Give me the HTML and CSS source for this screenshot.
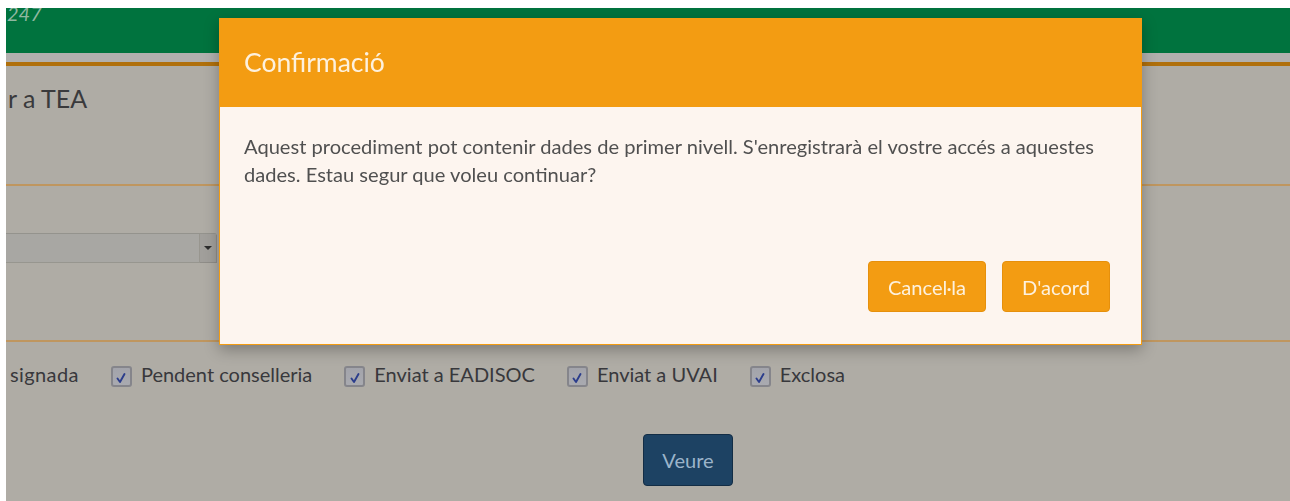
FILE: index.html
```html
<!DOCTYPE html>
<html lang="ca">
<head>
<meta charset="utf-8">
<title>Sol·licitud per a TEA</title>
<link rel="stylesheet" href="styles.css">
</head>
<body>
<div class="page">
  <header class="topbar"><span class="brand">247</span></header>
  <div class="subbar"></div>
  <main class="content">
    <h2 class="title">r a TEA</h2>
    <hr class="rule">
    <div class="field">
      <div class="select"><span class="select-arrow"></span></div>
    </div>
    <hr class="rule">
    <div class="checks">
      <span class="check-text">signada</span>
      <label class="check">
        <span class="box"><svg viewBox="0 0 12 12" width="12" height="12"><path d="M2.5 6.5 L5 10 L9.5 2" fill="none" stroke="#2b3d8c" stroke-width="1.9" stroke-linecap="round" stroke-linejoin="round"/></svg></span>
        <span class="check-text">Pendent conselleria</span>
      </label>
      <label class="check">
        <span class="box"><svg viewBox="0 0 12 12" width="12" height="12"><path d="M2.5 6.5 L5 10 L9.5 2" fill="none" stroke="#2b3d8c" stroke-width="1.9" stroke-linecap="round" stroke-linejoin="round"/></svg></span>
        <span class="check-text">Enviat a EADISOC</span>
      </label>
      <label class="check">
        <span class="box"><svg viewBox="0 0 12 12" width="12" height="12"><path d="M2.5 6.5 L5 10 L9.5 2" fill="none" stroke="#2b3d8c" stroke-width="1.9" stroke-linecap="round" stroke-linejoin="round"/></svg></span>
        <span class="check-text">Enviat a UVAI</span>
      </label>
      <label class="check">
        <span class="box"><svg viewBox="0 0 12 12" width="12" height="12"><path d="M2.5 6.5 L5 10 L9.5 2" fill="none" stroke="#2b3d8c" stroke-width="1.9" stroke-linecap="round" stroke-linejoin="round"/></svg></span>
        <span class="check-text">Exclosa</span>
      </label>
    </div>
    <div class="actions">
      <button class="btn-primary" type="button">Veure</button>
    </div>
  </main>
</div>

<div class="modal" role="dialog">
  <div class="modal-header">
    <h4 class="modal-title">Confirmació</h4>
  </div>
  <div class="modal-body">
    <p>Aquest procediment pot contenir dades de primer nivell. S'enregistrarà el vostre accés a aquestes dades. Estau segur que voleu continuar?</p>
  </div>
  <div class="modal-footer">
    <button class="btn-warning" type="button">Cancel·la</button>
    <button class="btn-warning" type="button">D'acord</button>
  </div>
</div>
</body>
</html>
```

FILE: styles.css
```css
* {
  box-sizing: border-box;
}

html, body {
  height: 100%;
}

body {
  margin: 0;
  padding: 8px 0 0 6px;
  background: #ffffff;
  font-family: "Lato", "Liberation Sans", sans-serif;
  font-size: 20.1px;
  color: #3c3c3c;
  overflow: hidden;
}

.page {
  height: 100%;
  background: #afaca5;
}

/* top navigation */
.topbar {
  height: 45px;
  background: #00733e;
  overflow: hidden;
}

.brand {
  display: block;
  margin-top: -8px;
  padding-left: 1px;
  font-size: 20px;
  font-style: italic;
  line-height: 26px;
  color: #8fb8a0;
}

.subbar {
  height: 13px;
  background: #b1b0ae;
  border-bottom: 4px solid #b0700c;
}

/* filter form */
.content {
  display: flex;
  flex-direction: column;
}

.title {
  margin: 17px 0 0 2px;
  font-size: 25px;
  font-weight: 400;
  line-height: 31px;
  color: #3a3a3c;
}

.rule {
  width: 100%;
  margin: 0;
  border: 0;
  border-top: 2px solid #bf965f;
}

.title + .rule {
  margin-top: 70px;
}

.field {
  margin-top: 47px;
  height: 30px;
}

.select {
  width: 211px;
  height: 30px;
  background: #a8a7a3;
  border: 1px solid #97968f;
  border-top-color: #94938d;
  border-left: 0;
  border-radius: 0 3px 3px 0;
  display: flex;
  justify-content: flex-end;
}

.select-arrow {
  width: 17px;
  height: 100%;
  background: #a19f9b;
  border-left: 1px solid #98968f;
  box-shadow: 1px 1px 0 #8f8d88;
  display: flex;
  align-items: center;
  justify-content: center;
}

.select-arrow::before {
  content: "";
  border-left: 4px solid transparent;
  border-right: 4px solid transparent;
  border-top: 4px solid #2d2d2d;
}

.field + .rule {
  margin-top: 77px;
}

.checks {
  margin-top: 18px;
  padding-left: 4px;
  display: flex;
  align-items: center;
  gap: 32px;
  font-size: 20px;
  line-height: 28px;
  color: #38383c;
}

.check {
  display: flex;
  align-items: center;
  gap: 9px;
}

.check-text:first-child {
  letter-spacing: 0.4px;
}

.box {
  width: 21px;
  height: 21px;
  margin-top: 5px;
  border: 2px solid #85858b;
  border-radius: 3px;
  background: linear-gradient(#a3a4ab, #a9aab0);
  display: flex;
  align-items: center;
  justify-content: center;
}

.box svg {
  margin-top: 3px;
}

.actions {
  margin-top: 46px;
  padding-left: 80px;
  display: flex;
  justify-content: center;
}

.btn-primary {
  width: 90px;
  height: 52px;
  padding: 0;
  font: inherit;
  color: #9bb4ca;
  background: #1d4263;
  border: 1px solid #132d45;
  border-radius: 4px;
}

/* confirmation dialog */
.modal {
  position: fixed;
  left: 219px;
  top: 18px;
  width: 923px;
  height: 327px;
  display: flex;
  flex-direction: column;
  background: #fdf5ef;
  border: 1px solid #f39c12;
  box-shadow: 0 5px 14px rgba(0, 0, 0, 0.28);
}

.modal-header {
  height: 89px;
  margin: -1px -1px 0;
  padding: 0 25px;
  background: #f39c12;
  display: flex;
  align-items: center;
}

.modal-title {
  margin: 0;
  padding-bottom: 1px;
  font-size: 26.5px;
  font-weight: 400;
  color: #fdf1de;
}

.modal-body {
  padding: 25px 24px 0;
}

.modal-body p {
  margin: 0;
  line-height: 28px;
  color: #505050;
}

.modal-footer {
  margin-top: auto;
  padding: 0 31px 32px;
  display: flex;
  justify-content: flex-end;
  gap: 16px;
}

.btn-warning {
  height: 51px;
  padding: 0 19px;
  font: inherit;
  color: #fdf1de;
  background: #f39c12;
  border: 1px solid #e6900c;
  border-radius: 4px;
}
```
